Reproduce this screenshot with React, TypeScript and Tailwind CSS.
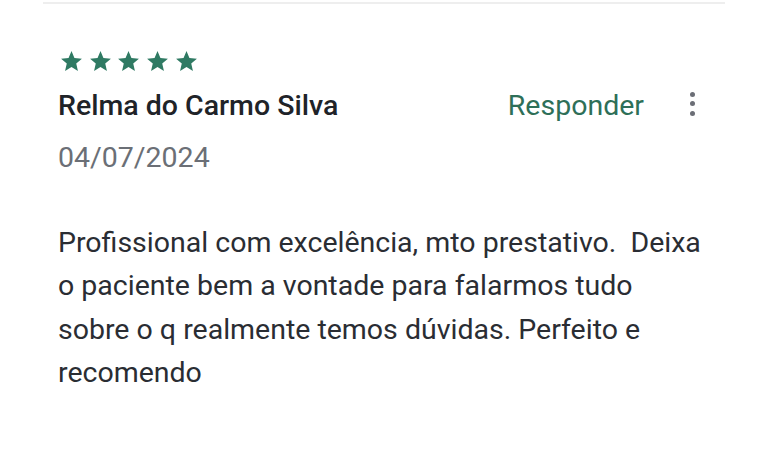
import React from "react";

const Star = () => (
  <svg width="25" height="25" viewBox="0 0 24 24" className="block">
    <path
      d="M12 17.27L18.18 21l-1.64-7.03L22 9.24l-7.19-.61L12 2 9.19 8.63 2 9.24l5.46 4.73L5.82 21z"
      fill="#2f7a63"
    />
  </svg>
);

export default function App() {
  return (
    <div
      className="w-[768px] h-[451px] bg-white overflow-hidden"
      style={{ fontFamily: "Roboto, 'Noto Sans', sans-serif" }}
    >
      <div className="mx-[43px] mt-[2px] h-[2px] bg-[#eeeeee]" />
      <div className="pl-[58px] pr-[73px] pt-[45px]">
        <div className="flex gap-[3.7px] pl-[1px]">
          <Star />
          <Star />
          <Star />
          <Star />
          <Star />
        </div>
        <div className="flex items-center justify-between mt-[14px]">
          <div className="text-[28.5px] leading-[36px] font-medium text-[#202328]">
            Relma do Carmo Silva
          </div>
          <div className="flex items-center gap-[46px]">
            <span className="text-[28.5px] leading-[36px] text-[#2e6f58]">
              Responder
            </span>
            <div className="flex flex-col gap-[4.5px] items-center mb-[5px]">
              <span className="w-[5px] h-[5px] rounded-full bg-[#6b6e76]" />
              <span className="w-[5px] h-[5px] rounded-full bg-[#6b6e76]" />
              <span className="w-[5px] h-[5px] rounded-full bg-[#6b6e76]" />
            </div>
          </div>
        </div>
        <div className="mt-[16px] text-[28.5px] leading-[36px] text-[#6b6f76]">
          04/07/2024
        </div>
        <div className="mt-[45px] text-[28.5px] leading-[43.4px] text-[#2a2d33] w-[680px] whitespace-pre-wrap">
          {"Profissional com excelência, mto prestativo.  Deixa\no paciente bem a vontade para falarmos tudo\nsobre o q realmente temos dúvidas. Perfeito e\nrecomendo"}
        </div>
      </div>
    </div>
  );
}
